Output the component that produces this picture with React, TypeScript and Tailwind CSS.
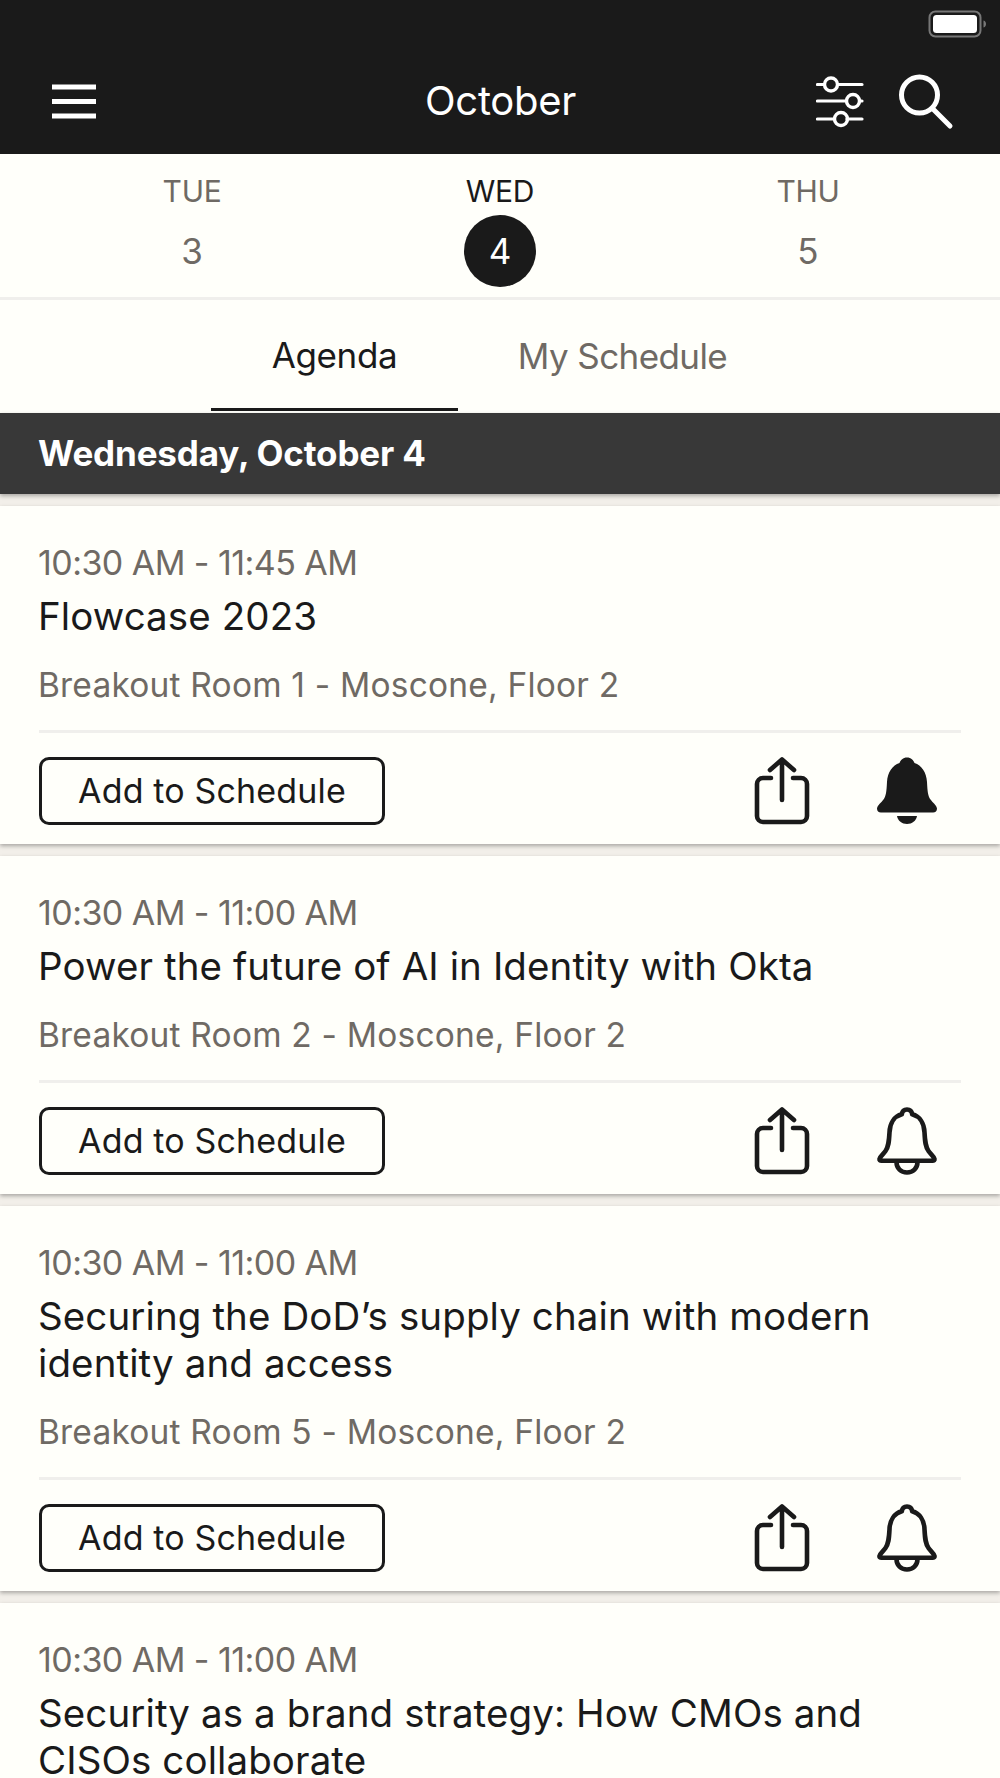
const font = "font-['Inter','Liberation_Sans',sans-serif]";

function Battery() {
  return (
    <svg width="60" height="28" viewBox="0 0 60 28" className="block">
      <rect x="1.5" y="1.5" width="51" height="25" rx="6" fill="none" stroke="#777" strokeWidth="2" />
      <rect x="5" y="5" width="44" height="18" rx="3.5" fill="#fff" />
      <path d="M55.5 10.5c2 .6 2.500 2 2.500 3.500s-.5 2.900-2.500 3.500z" fill="#777" />
    </svg>
  );
}

function Menu() {
  return (
    <svg width="46" height="36" viewBox="0 0 46 36" className="block">
      <path d="M1 3h44M1 17.500h44M1 32h44" stroke="#fff" strokeWidth="5" fill="none" />
    </svg>
  );
}

function Sliders() {
  return (
    <svg width="48" height="52" viewBox="0 0 48 52" className="block" fill="none" stroke="#fff" strokeWidth="3.200" strokeLinecap="round">
      <path d="M1.500 8.500H8M22 8.500H46M1.500 25H29M44 25H46M1.500 43H17.500M31 43H46" />
      <circle cx="15" cy="8.500" r="6.500" strokeWidth="3.400" />
      <circle cx="37" cy="25" r="6.500" strokeWidth="3.400" />
      <circle cx="25" cy="43" r="6.500" strokeWidth="3.400" />
    </svg>
  );
}

function Search() {
  return (
    <svg width="56" height="56" viewBox="0 0 56 56" className="block" fill="none" stroke="#fff" strokeLinecap="round">
      <circle cx="21.500" cy="21" r="18" strokeWidth="5" />
      <path d="M35 35 L52 52" strokeWidth="5" />
    </svg>
  );
}

function Share() {
  return (
    <svg width="56" height="68" viewBox="0 0 56 68" className="block" fill="none" stroke="#1a1a1a" strokeWidth="4.600" strokeLinecap="round" strokeLinejoin="round">
      <path d="M17 21H9a6 6 0 0 0-6 6v32a6 6 0 0 0 6 6h38a6 6 0 0 0 6-6V27a6 6 0 0 0-6-6h-8" />
      <path d="M28 43V3M16 13 28 2.500l12 10.500" />
    </svg>
  );
}

function Bell({ filled }: { filled?: boolean }) {
  return (
    <svg width="62" height="68" viewBox="0 0 62 68" className="block">
      {filled ? (
        <>
          <path
            d="M31 .5c4 0 6.500 2.500 7.500 5.500 7 2.500 12 9 12.500 19 .5 10 1 14 3.500 17.500 2 3 6 5.500 6.500 9 0 2.500-1.500 4-4 4H5c-2.500 0-4-1.500-4-4 .5-3.500 4.500-6 6.500-9 2.500-3.500 3-7.500 3.500-17.500 .5-10 5.500-16.500 12.500-19 1-3 3.500-5.500 7.500-5.500z"
            fill="#1a1a1a"
          />
          <path d="M21 59h20c-.8 4.800-5 8-10 8s-9.200-3.200-10-8z" fill="#1a1a1a" />
        </>
      ) : (
        <>
          <path
            d="M31 2.500c2.800 0 4.800 2 5.200 4.800 7.500 2 12 9 12.300 18 .5 10 1 14.500 4 18.700 2 3 5.500 5.500 6 8 .2 1-.5 1.700-2 1.700H5.500c-1.500 0-2.200-.7-2-1.700 .5-2.500 4-5 6-8 3-4.200 3.500-8.700 4-18.700 .3-9 4.800-16 12.300-18 .4-2.800 2.400-4.800 5.200-4.800z"
            fill="none"
            stroke="#1a1a1a"
            strokeWidth="4.600"
            strokeLinejoin="round"
          />
          <path d="M20.500 55c0 6.500 4.500 10.500 10.500 10.500s10.500-4 10.500-10.500" fill="none" stroke="#1a1a1a" strokeWidth="4.600" />
        </>
      )}
    </svg>
  );
}

function Day({ name, num, active }: { name: string; num: string; active?: boolean }) {
  return (
    <div className="flex w-[120px] flex-col items-center">
      <div className={`text-[30px] leading-[36px] tracking-[-0.3px] ${active ? "text-[#1a1a1a]" : "text-[#6f6a64]"}`}>{name}</div>
      <div className={`mt-[6px] flex h-[72px] w-[72px] items-center justify-center rounded-full text-[35px] ${active ? "bg-[#1a1a1a] text-white" : "text-[#6f6a64]"}`}>
        {num}
      </div>
    </div>
  );
}

function Card({ time, title, room, filled }: { time: string; title: string[]; room: string; filled?: boolean }) {
  return (
    <div className="bg-[#fffffa] px-[39px] shadow-[0_2px_4px_rgba(0,0,0,0.3)]">
      <div className="-ml-[1px] pt-[36px] text-[34px] leading-[42px] tracking-[-0.55px] text-[#6f6a64]">{time}</div>
      <div className="-ml-[1px] mt-[9px] text-[38.500px] leading-[47px] tracking-[0.1px] text-[#1a1a1a]">
        {title.map((t) => (
          <div key={t}>{t}</div>
        ))}
      </div>
      <div className="-ml-[1px] mt-[24px] text-[33.500px] leading-[42px] tracking-[0.2px] text-[#6f6a64]">{room}</div>
      <div className="mt-[24px] h-[3px] bg-[#f0efec]" />
      <div className="flex h-[111px] items-center justify-between pt-[4px]">
        <div className="flex h-[68px] w-[346px] items-center justify-center rounded-[10px] border-[3px] border-[#1a1a1a] text-[34px] tracking-[0.15px] text-[#1a1a1a]">
          Add to Schedule
        </div>
        <div className="mr-[23px] flex items-center gap-[66px]">
          <Share />
          <Bell filled={filled} />
        </div>
      </div>
    </div>
  );
}

export default function App() {
  return (
    <div className={`h-[1778px] w-[1000px] overflow-hidden bg-[#f2efe9] ${font}`}>
      <div className="flex h-[154px] flex-col bg-[#1a1a1a]">
        <div className="flex h-[48px] items-start justify-end pr-[12px] pt-[10px]">
          <Battery />
        </div>
        <div className="flex flex-1 items-start justify-between pl-[51px] pr-[46px] pt-[4px]">
          <div className="w-[216px] pt-[32px]">
            <Menu />
          </div>
          <div className="pt-[26px] text-[40px] leading-[46px] tracking-[-0.3px] text-white">October</div>
          <div className="flex w-[220px] items-start justify-end gap-[34px]">
            <div className="pt-[24px]">
              <Sliders />
            </div>
            <div className="pt-[22px]">
              <Search />
            </div>
          </div>
        </div>
      </div>

      <div className="flex h-[146px] justify-between border-b-[3px] border-[#f0efec] bg-[#fffffa] px-[132px] pt-[19px]">
        <Day name="TUE" num="3" />
        <Day name="WED" num="4" active />
        <Day name="THU" num="5" />
      </div>

      <div className="flex h-[113px] bg-[#fffffa] pl-[211px]">
        <div className="flex h-[111px] w-[247px] items-center justify-center border-b-[3px] border-[#1a1a1a] pt-[2px] text-[35px] tracking-[-0.4px] text-[#1a1a1a]">
          Agenda
        </div>
        <div className="flex h-[111px] w-[329px] items-center justify-center pt-[2px] text-[35px] tracking-[-0.6px] text-[#6f6a64]">
          My Schedule
        </div>
      </div>

      <div className="flex h-[81px] items-center bg-[#383838] pl-[38px] text-[35px] font-bold tracking-[-0.15px] text-white shadow-[0_2px_4px_rgba(0,0,0,0.3)]">
        Wednesday, October 4
      </div>

      <div className="mt-[12px] flex flex-col gap-[12px]">
        <Card time="10:30 AM - 11:45 AM" title={["Flowcase 2023"]} room="Breakout Room 1 - Moscone, Floor 2" filled />
        <Card time="10:30 AM - 11:00 AM" title={["Power the future of AI in Identity with Okta"]} room="Breakout Room 2 - Moscone, Floor 2" />
        <Card time="10:30 AM - 11:00 AM" title={["Securing the DoD’s supply chain with modern", "identity and access"]} room="Breakout Room 5 - Moscone, Floor 2" />
        <Card time="10:30 AM - 11:00 AM" title={["Security as a brand strategy: How CMOs and", "CISOs collaborate"]} room="Breakout Room 5 - Moscone, Floor 2" />
      </div>
    </div>
  );
}
